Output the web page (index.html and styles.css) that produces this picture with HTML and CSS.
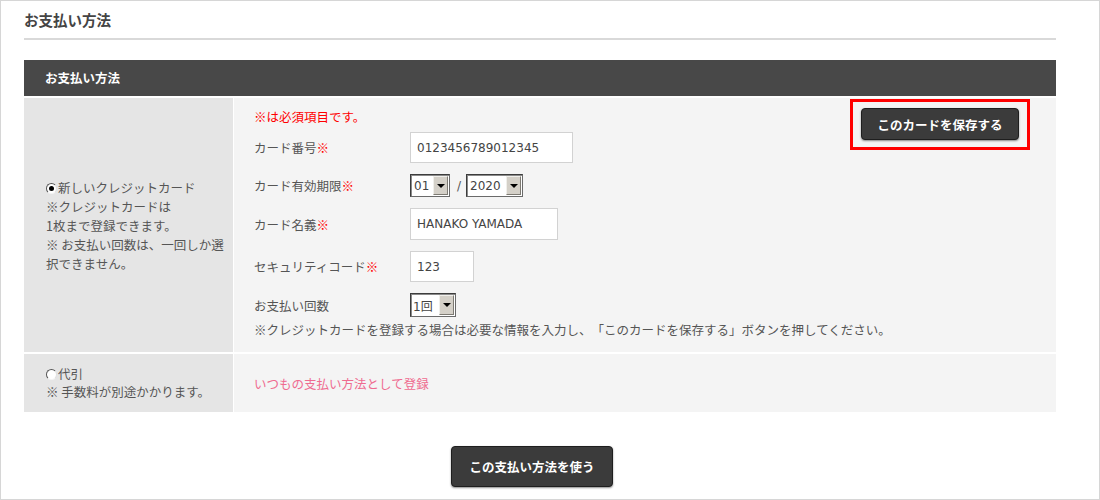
FILE: index.html
```html
<!DOCTYPE html>
<html lang="ja">
<head>
<meta charset="utf-8">
<title>お支払い方法</title>
<link rel="stylesheet" href="styles.css">
</head>
<body>
<div class="frame">
  <h1 class="page-title">お支払い方法</h1>
  <section class="payment">
    <div class="payment-head">お支払い方法</div>
    <div class="pay-row">
      <div class="pay-option">
        <p class="option-text"><span class="radio radio--on"></span>新しいクレジットカード<br>※クレジットカードは<br>1枚まで登録できます。<br>※ お支払い回数は、一回しか選<br>択できません。</p>
      </div>
      <div class="pay-detail">
        <p class="required-note">※は必須項目です。</p>
        <div class="fields">
          <div class="field f-31"><span class="label">カード番号<em>※</em></span><input class="textbox tb-number" type="text" value="0123456789012345" readonly></div>
          <div class="field f-23"><span class="label">カード有効期限<em>※</em></span><span class="select sel-month"><span class="sel-val">01</span><span class="sel-btn"></span></span><span class="slash">/</span><span class="select sel-year"><span class="sel-val">2020</span><span class="sel-btn"></span></span></div>
          <div class="field f-32"><span class="label">カード名義<em>※</em></span><input class="textbox tb-name" type="text" value="HANAKO YAMADA" readonly></div>
          <div class="field f-31"><span class="label">セキュリティコード<em>※</em></span><input class="textbox tb-code" type="text" value="123" readonly></div>
          <div class="field f-24"><span class="label">お支払い回数</span><span class="select sel-times"><span class="sel-val sel-val--jp">1回</span><span class="sel-btn"></span></span></div>
        </div>
        <p class="help">※クレジットカードを登録する場合は必要な情報を入力し、「このカードを保存する」ボタンを押してください。</p>
        <div class="save-highlight"><button class="btn btn--save" type="button">このカードを保存する</button></div>
      </div>
    </div>
    <div class="pay-row pay-row--cod">
      <div class="pay-option">
        <p class="option-text option-text--cod"><span class="radio"></span>代引<br>※ 手数料が別途かかります。</p>
      </div>
      <div class="pay-detail pay-detail--cod">
        <a class="default-link" href="#">いつもの支払い方法として登録</a>
      </div>
    </div>
  </section>
  <div class="actions"><button class="btn btn--use" type="button">この支払い方法を使う</button></div>
</div>
</body>
</html>
```
FILE: styles.css
```css
html, body {
  margin: 0;
  padding: 0;
  background: #fff;
}

body {
  font-family: "Noto Sans CJK JP", "Noto Sans", sans-serif;
  color: #555;
  font-size: 12.5px;
  text-spacing-trim: space-all;
}

.frame {
  box-sizing: border-box;
  width: 1100px;
  height: 500px;
  border: 1px solid #d6d6d6;
  padding: 0 43px 0 23px;
  overflow: hidden;
}

.page-title {
  margin: 9px 0 0;
  font-size: 14.5px;
  font-weight: bold;
  line-height: 20px;
  color: #444;
  padding-bottom: 8px;
  border-bottom: 2px solid #d9d9d9;
}

.payment {
  margin-top: 20px;
}

.payment-head {
  height: 36px;
  line-height: 36px;
  padding-left: 21px;
  background: #484848;
  color: #fff;
  font-weight: bold;
  font-size: 12.5px;
}

.pay-row {
  display: flex;
  gap: 1px;
  margin-top: 2px;
}

.pay-option {
  box-sizing: border-box;
  width: 209px;
  flex: none;
  background: #e5e5e5;
  padding-left: 22px;
  display: flex;
  align-items: center;
}

.option-text {
  margin: 0;
  line-height: 19px;
  color: #555;
}

.option-text--cod {
  line-height: 18px;
}

.radio {
  display: inline-block;
  box-sizing: border-box;
  width: 11px;
  height: 11px;
  border-radius: 50%;
  border: 1px solid;
  border-color: #555 #e0e0e0 #f4f4f4 #555;
  background: #fff;
  margin-right: 1px;
  vertical-align: -1px;
  position: relative;
}

.radio--on::after {
  content: "";
  position: absolute;
  left: 2px;
  top: 2px;
  width: 5px;
  height: 5px;
  border-radius: 50%;
  background: #000;
}

.pay-detail {
  flex: 1;
  background: #f4f4f4;
  padding: 10px 20px 13px;
  position: relative;
}

.required-note {
  margin: 0;
  line-height: 18px;
  color: #f00;
}

.fields {
  display: grid;
  gap: 11px;
  margin-top: 6px;
}

.field {
  display: flex;
  align-items: center;
}

.f-31 { height: 31px; }
.f-23 { height: 23px; }
.f-32 { height: 32px; }
.f-24 { height: 24px; }

.label {
  width: 156px;
  flex: none;
  color: #555;
}

.label em {
  font-style: normal;
  color: #f00;
}

.textbox {
  box-sizing: border-box;
  height: 100%;
  border: 1px solid #d2d2d2;
  background: #fff;
  padding: 0 0 0 6px;
  margin: 0;
  font-family: "DejaVu Sans", sans-serif;
  font-size: 12px;
  color: #444;
  outline: none;
}

.tb-number { width: 163px; }
.tb-name { width: 148px; }
.tb-code { width: 64px; }

.select {
  box-sizing: border-box;
  display: inline-flex;
  height: 100%;
  border: 1px solid #3c3c3c;
  border-right-color: #6a6a6a;
  border-bottom-color: #6a6a6a;
  box-shadow: inset 1px 1px 0 #8a8a8a;
  background: #fff;
}

.sel-month { width: 40px; }
.sel-year { width: 57px; }
.sel-times { width: 46px; }

.sel-val {
  flex: 1;
  padding-left: 3px;
  font-family: "DejaVu Sans", sans-serif;
  font-size: 12px;
  color: #444;
  display: flex;
  align-items: center;
}

.sel-val--jp {
  font-family: "DejaVu Sans", "Noto Sans CJK JP", sans-serif;
  padding-left: 2px;
}

.sel-btn {
  width: 15px;
  flex: none;
  box-sizing: border-box;
  margin: 1px 1px 1px 0;
  background: #d4d0c8;
  border: 1px solid;
  border-color: #f0efeb #7d7a73 #7d7a73 #f0efeb;
  position: relative;
}

.sel-btn::after {
  content: "";
  position: absolute;
  left: 50%;
  top: 50%;
  margin-left: -4px;
  margin-top: -2px;
  border-left: 4px solid transparent;
  border-right: 4px solid transparent;
  border-top: 4px solid #000;
}

.slash {
  margin: 0 5px 0 7px;
  color: #555;
  font-family: "DejaVu Sans", sans-serif;
  font-size: 12px;
}

.help {
  margin: 4px 0 0;
  line-height: 18px;
  color: #555;
}

.save-highlight {
  position: absolute;
  top: 1px;
  right: 26px;
  border: 3px solid #f00;
  padding: 6px 8px 7px;
  background: #f4f4f4;
}

.btn {
  box-sizing: border-box;
  display: block;
  background: #3b3b3b;
  border: 1px solid #1e1e1e;
  border-radius: 4px;
  box-shadow: 0 1px 2px rgba(0, 0, 0, 0.45);
  color: #fff;
  font-family: "Noto Sans CJK JP", "Noto Sans", sans-serif;
  font-weight: bold;
  font-size: 12.5px;
  padding: 0;
  cursor: pointer;
}

.btn--save {
  width: 158px;
  height: 32px;
}

.btn--use {
  width: 162px;
  height: 41px;
}

.pay-row--cod {
  height: 58px;
}

.pay-detail--cod {
  display: flex;
  align-items: center;
  padding-top: 0;
  padding-bottom: 0;
}

.default-link {
  color: #ef6b90;
  text-decoration: none;
}

.actions {
  display: flex;
  justify-content: center;
  padding-right: 16px;
  margin-top: 34px;
}
```
